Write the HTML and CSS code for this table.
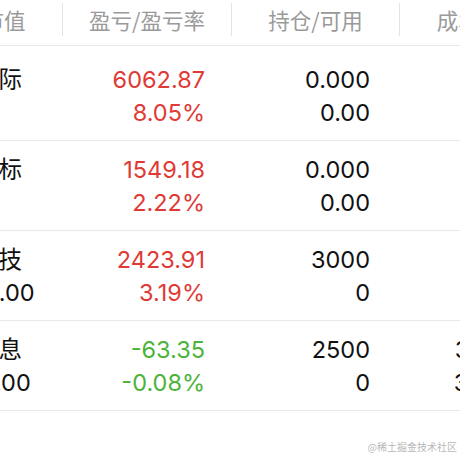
FILE: index.html
```html
<!DOCTYPE html>
<html lang="zh">
<head>
<meta charset="utf-8">
<link rel="stylesheet" href="styles.css">
</head>
<body>
<div class="viewport">
  <div class="table">
    <div class="row head">
      <div class="hcell first">市值</div>
      <div class="hcell">盈亏/盈亏率</div>
      <div class="hcell">持仓/可用</div>
      <div class="hcell">成本/现价</div>
    </div>
    <div class="body">
      <div class="row item">
        <div class="cell name"><span>新浪国际</span><span>0.00</span></div>
        <div class="cell num up"><span>6062.87</span><span>8.05%</span></div>
        <div class="cell num c3"><span>0.000</span><span>0.00</span></div>
        <div class="cell num c4"><span>0.000</span><span>0.000</span></div>
      </div>
      <div class="row item">
        <div class="cell name"><span>腾讯指标</span><span>0.00</span></div>
        <div class="cell num up"><span>1549.18</span><span>2.22%</span></div>
        <div class="cell num c3"><span>0.000</span><span>0.00</span></div>
        <div class="cell num c4"><span>0.000</span><span>0.000</span></div>
      </div>
      <div class="row item">
        <div class="cell name"><span>恒生科技</span><span>78330.00</span></div>
        <div class="cell num up"><span>2423.91</span><span>3.19%</span></div>
        <div class="cell num c3"><span>3000</span><span>0</span></div>
        <div class="cell num c4"><span>7.302</span><span>7.110</span></div>
      </div>
      <div class="row item">
        <div class="cell name"><span>中国电息</span><span>81250.00</span></div>
        <div class="cell num down"><span>-63.35</span><span>-0.08%</span></div>
        <div class="cell num c3"><span>2500</span><span>0</span></div>
        <div class="cell num c4"><span>32.525</span><span>32.500</span></div>
      </div>
    </div>
  </div>
</div>
<div class="watermark">@稀土掘金技术社区</div>
</body>
</html>
```

FILE: styles.css
```css
html, body {
  margin: 0;
  padding: 0;
  background: #ffffff;
}
body {
  width: 460px;
  height: 460px;
  overflow: hidden;
  position: relative;
  font-family: "Inter", "Noto Sans CJK SC", sans-serif;
}
.viewport {
  width: 460px;
  overflow: hidden;
}
.table {
  width: 640px;
  margin-left: -72px;
}
.row {
  display: grid;
  grid-template-columns: 134px 169px 168px 169px;
}
.head {
  height: 45px;
  border-bottom: 1px solid #e8e8e8;
  align-items: start;
}
.hcell {
  margin-top: 3px;
  height: 33px;
  line-height: 33px;
  text-align: center;
  color: #9a9a9a;
  font-size: 21.5px;
  font-family: "Noto Sans CJK SC", sans-serif;
  border-left: 1px solid #e4e4e4;
}
.hcell.first {
  border-left: none;
  padding-left: 18px;
}
.body {
  padding-top: 5px;
}
.item {
  height: 89px;
  border-bottom: 1px solid #e8e8e8;
  align-items: center;
}
.cell {
  display: flex;
  flex-direction: column;
  font-size: 23.5px;
  line-height: 33px;
  color: #111111;
}
.name {
  align-items: flex-start;
}
.num {
  align-items: flex-end;
  padding-right: 26px;
}
.num.c3 {
  padding-right: 29px;
}
.num.c4 {
  padding-right: 35px;
}
.up {
  color: #e03a36;
}
.down {
  color: #4cb43a;
}
.watermark {
  position: absolute;
  right: 3px;
  bottom: 6px;
  font-size: 10px;
  color: #b8b8b8;
  font-family: "Noto Sans CJK SC", sans-serif;
}
```
